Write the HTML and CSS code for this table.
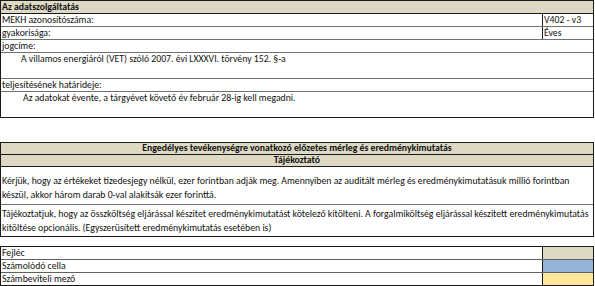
FILE: index.html
```html
<!DOCTYPE html>
<html lang="hu">
<head>
<meta charset="utf-8">
<link rel="stylesheet" href="styles.css">
</head>
<body>
<section class="sheet info">
  <div class="row head">Az adatszolgáltatás</div>
  <div class="row split"><span class="label">MEKH azonosítószáma:</span><span class="val">V402 - v3</span></div>
  <div class="row split"><span class="label">gyakorisága:</span><span class="val">Éves</span></div>
  <div class="row">jogcíme:</div>
  <div class="row tall indent">A villamos energiáról (VET) szóló 2007. évi LXXXVI. törvény 152. §-a</div>
  <div class="row">teljesítésének határideje:</div>
  <div class="row tall indent2">Az adatokat évente, a tárgyévet követő év február 28-ig kell megadni.</div>
</section>

<section class="sheet notes">
  <div class="row head center">Engedélyes tevékenységre vonatkozó előzetes mérleg és eredménykimutatás</div>
  <div class="row head center">Tájékoztató</div>
  <div class="row para para-bottom">Kérjük, hogy az értékeket tizedesjegy nélkül, ezer forintban adják meg. Amennyiben az auditált mérleg és eredménykimutatásuk millió forintban készül, akkor három darab 0-val alakitsák ezer forinttá.</div>
  <div class="row para para-top">Tájékoztatjuk, hogy az összköltség eljárással készitet eredménykimutatást kötelező kitölteni. A forgalmiköltség eljárással készitett eredménykimutatás kitöltése opcionális. (Egyszerüsített eredménykimutatás esetében is)</div>
</section>

<section class="sheet legend">
  <div class="row split"><span class="label">Fejléc</span><span class="swatch sw-head"></span></div>
  <div class="row split"><span class="label">Számolódó cella</span><span class="swatch sw-calc"></span></div>
  <div class="row split"><span class="label">Számbeviteli mező</span><span class="swatch sw-input"></span></div>
</section>
</body>
</html>
```
FILE: styles.css
```css
html, body {
  margin: 0;
  padding: 0;
  background: #ffffff;
}
body {
  font-family: Carlito, Lato, "Liberation Sans", sans-serif;
  font-size: 9.75px;
  color: #111;
  width: 594px;
}
.sheet {
  border: 1px solid #1a1a1a;
  width: 592px;
}
.info { margin: 0; }
.notes { margin-top: 24px; }
.legend { margin-top: 9px; }

.row {
  height: 12px;
  line-height: 12px;
  padding: 0 1px;
  border-top: 1px solid #707070;
  white-space: nowrap;
  overflow: hidden;
}
.row:first-child { border-top: none; }
.head {
  background: #ddd9c4;
  font-weight: bold;
  border-top-color: #1a1a1a;
}
.head + .row { border-top-color: #1a1a1a; }
.notes .head { height: 11px; line-height: 11px; }
.center { text-align: center; }
.split {
  display: flex;
  padding: 0;
}
.split .label {
  flex: 1;
  padding-left: 1px;
}
.split .val {
  width: 49px;
  border-left: 1px solid #1a1a1a;
  padding-left: 1px;
}
.tall { height: 25px; }
.indent { padding-left: 20px; }
.indent2 { padding-left: 22px; }

.para {
  white-space: normal;
  line-height: 14px;
  display: flex;
}
.para-bottom {
  height: 35px;
  align-items: flex-end;
  padding-bottom: 2px;
}
.para-top {
  height: 29px;
  align-items: flex-start;
  padding-top: 2px;
}

.swatch {
  width: 50px;
  border-left: 1px solid #1a1a1a;
}
.legend .row { border-top-color: #606060; }
.sw-head { background: #ddd9c4; }
.sw-calc { background: #95b3d7; }
.sw-input { background: #ffe699; }
```
